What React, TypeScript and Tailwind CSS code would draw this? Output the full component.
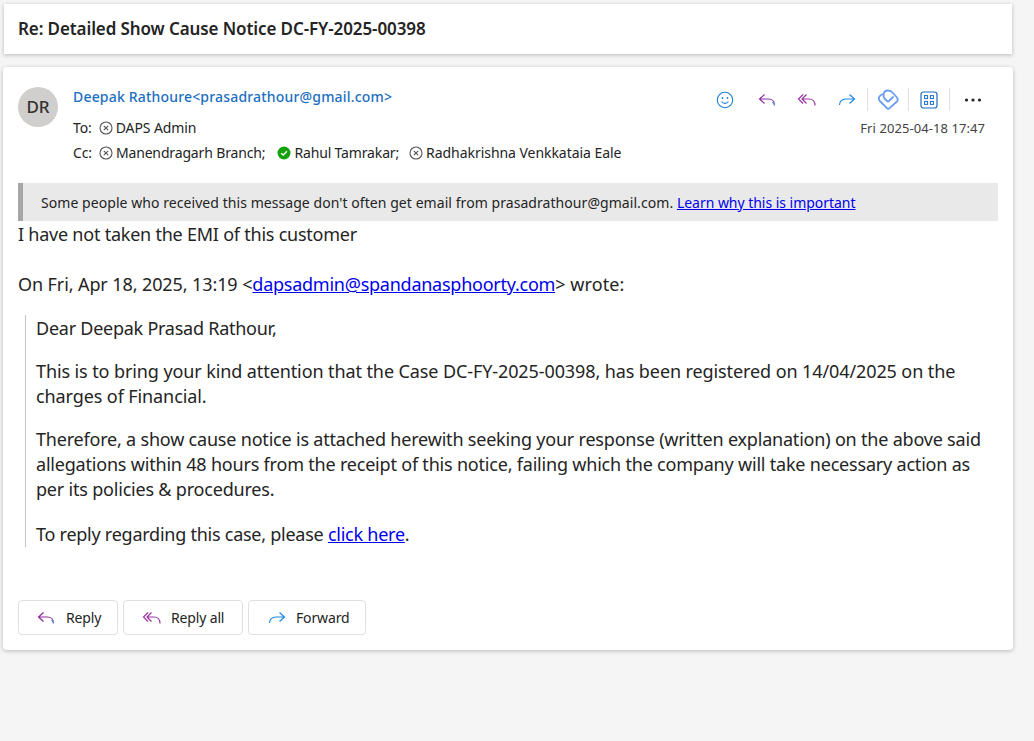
import React from "react";

function ReplyIcon({ className = "" }: { className?: string }) {
  return (
    <svg width="20" height="20" viewBox="0 0 20 20" fill="none" className={className}>
      <path d="M7.5 4.5 L2.5 9 L7.5 13.5 M2.5 9 H11.5 C15 9 17.5 11.5 17.5 15" stroke="#8e2a9e" strokeWidth="1.2" />
      <path d="M15.5 12 C16.8 13 17.5 14 17.5 15.5" stroke="#4a8fe0" strokeWidth="1.2" />
    </svg>
  );
}
function ReplyAllIcon({ className = "" }: { className?: string }) {
  return (
    <svg width="20" height="20" viewBox="0 0 20 20" fill="none" className={className}>
      <path d="M6 4.5 L1.5 9 L6 13.5 M9.5 4.5 L5 9 L9.5 13.5 M5 9 H12 C15.5 9 18 11.5 18 15.5" stroke="#9a35a5" strokeWidth="1.2" />
    </svg>
  );
}
function ForwardIcon({ className = "" }: { className?: string }) {
  return (
    <svg width="20" height="20" viewBox="0 0 20 20" fill="none" className={className}>
      <path d="M12.5 4.5 L17.5 9 L12.5 13.5 M17.5 9 H9 C5 9 2.5 11.5 2.5 15" stroke="#1e88e5" strokeWidth="1.2" />
    </svg>
  );
}
function Unknown() {
  return (
    <svg width="14" height="14" viewBox="0 0 14 14" fill="none" className="shrink-0">
      <circle cx="7" cy="7" r="6" stroke="#555" strokeWidth="1.1" />
      <path d="M4.8 4.8 L9.2 9.2 M9.2 4.8 L4.8 9.2" stroke="#555" strokeWidth="1.1" />
    </svg>
  );
}
function Available() {
  return (
    <svg width="14" height="14" viewBox="0 0 14 14" fill="none" className="shrink-0">
      <circle cx="7" cy="7" r="6.5" fill="#13a10e" />
      <path d="M4.2 7.2 L6.2 9.1 L9.9 5.2" stroke="#fff" strokeWidth="1.4" />
    </svg>
  );
}
function Sep() {
  return <div className="w-px h-[23px] bg-[#e0e0e0]" />;
}

export default function App() {
  return (
    <div className="min-h-[741px] bg-[#f5f5f5] pt-[4px] pl-[3px] pr-[21px] text-[#242424] font-['Noto_Sans',sans-serif]">
      <div className="ml-px mr-px h-[50px] bg-white shadow-[0_1px_4px_rgba(0,0,0,0.25)] flex items-center pl-[14px]">
        <h1 className="text-[17px] font-semibold tracking-[-0.1px]">Re: Detailed Show Cause Notice DC-FY-2025-00398</h1>
      </div>

      <div className="mt-[13px] h-[583px] bg-white rounded-[4px] shadow-[0_1px_4px_rgba(0,0,0,0.25)] pt-[20px] pl-[15px] pr-[15px] flex flex-col">
        <div className="flex h-[96px]">
          <div className="w-10 h-10 rounded-full bg-[#d1cfcd] flex items-center justify-center text-[17px] text-[#323130] font-medium">DR</div>
          <div className="ml-[15px] flex-1 text-[14px] leading-[20px]">
            <div className="text-[#1b6ec2] h-[20px] font-medium tracking-[0.18px]">Deepak Rathoure&lt;prasadrathour@gmail.com&gt;</div>
            <div className="mt-[11px] flex items-center gap-[7px] h-[20px] tracking-[-0.1px]">
              <span>To:</span>
              <span className="flex items-center gap-[3px]"><Unknown />DAPS Admin</span>
            </div>
            <div className="mt-[5px] flex items-center h-[20px] tracking-[-0.15px]">
              <span className="mr-[7px]">Cc:</span>
              <span className="flex items-center gap-[3px] mr-[12px]"><Unknown />Manendragarh Branch;</span>
              <span className="flex items-center gap-[3px] mr-[10px]"><Available />Rahul Tamrakar;</span>
              <span className="flex items-center gap-[3px] tracking-[-0.05px]"><Unknown />Radhakrishna Venkkataia Eale</span>
            </div>
          </div>
          <div className="flex flex-col items-end pr-[13px]">
            <div className="flex items-center h-[23px] mt-[1px] pr-[3px]">
              <svg width="20" height="20" viewBox="0 0 20 20" fill="none" className="mr-[22px]">
                <circle cx="10" cy="10" r="7.7" stroke="#1f7fd1" strokeWidth="1.1" />
                <circle cx="7.5" cy="8" r="0.9" fill="#1f7fd1" />
                <circle cx="12.5" cy="8" r="0.9" fill="#1f7fd1" />
                <path d="M6.5 11.5 C8 14 12 14 13.5 11.5" stroke="#1f7fd1" strokeWidth="1.1" />
              </svg>
              <ReplyIcon className="mr-[20px]" />
              <ReplyAllIcon className="mr-[20px]" />
              <ForwardIcon className="mr-[10px]" />
              <Sep />
              <svg width="22" height="22" viewBox="0 0 22 22" fill="none" className="mx-[9px]">
                <path d="M10 19.2 L2.8 12 Q0.8 9.5 2.8 7 Q4.5 5.2 6.5 5.5 Q7 1.5 11 1.5 Q14 1.5 16 4 L20 8.5 Q21.5 10.5 20 12.5 L12.5 19.2 Q11.2 20.2 10 19.2 Z" stroke="#6b9cf5" strokeWidth="1.8" strokeLinejoin="round" />
                <path d="M6.5 5.5 Q6 8 8 10 L10 12 Q11 13 12 12 L16 8" stroke="#6b9cf5" strokeWidth="1.8" strokeLinecap="round" />
              </svg>
              <Sep />
              <svg width="18" height="18" viewBox="0 0 18 18" fill="none" className="mx-[11px]">
                <rect x="1" y="1" width="16" height="16" rx="2.5" stroke="#1b6ec2" strokeWidth="1.2" />
                <rect x="4.6" y="4.6" width="3" height="3" stroke="#1b6ec2" strokeWidth="1" />
                <rect x="10.4" y="4.6" width="3" height="3" stroke="#1b6ec2" strokeWidth="1" />
                <rect x="4.6" y="10.4" width="3" height="3" stroke="#1b6ec2" strokeWidth="1" />
                <rect x="10.4" y="10.4" width="3" height="3" stroke="#1b6ec2" strokeWidth="1" />
              </svg>
              <Sep />
              <svg width="18" height="6" viewBox="0 0 18 6" className="ml-[14px]" fill="#242424">
                <circle cx="2.5" cy="3" r="1.6" />
                <circle cx="9" cy="3" r="1.6" />
                <circle cx="15.5" cy="3" r="1.6" />
              </svg>
            </div>
            <div className="mt-[9px] text-[13px] leading-[16px] text-[#424242] tracking-[0.07px]">Fri 2025-04-18 17:47</div>
          </div>
        </div>

        <div className="h-[38px] bg-[#e9e9e9] border-l-[5px] border-[#a6a6a6] flex items-center pl-[18px] text-[14px] tracking-[0.06px]">
          <span>Some people who received this message don't often get email from prasadrathour@gmail.com. <a href="#" className="text-[#0000ee] underline tracking-[-0.03px]">Learn why this is important</a></span>
        </div>

        <div className="text-[18px] leading-[25px] tracking-[-0.2px] pl-0">
          <div className="mt-[1px] tracking-[-0.23px]">I have not taken the EMI of this customer</div>
          <div className="mt-[25px] tracking-[-0.1px]">On Fri, Apr 18, 2025, 13:19 &lt;<a href="#" className="text-[#0000ee] underline tracking-[-0.25px]">dapsadmin@spandanasphoorty.com</a><span className="tracking-[0.1px]">&gt; wrote:</span></div>
          <div className="mt-[18px] ml-[7px] border-l border-[#c4c4c4] pl-[10px]">
            <p className="pt-[1px] tracking-[-0.25px]">Dear Deepak Prasad Rathour,</p>
            <p className="mt-[18px] tracking-[-0.1px]">This is to bring your kind attention that the Case DC-FY-2025-00398, has been registered on 14/04/2025 on the charges of Financial.</p>
            <p className="mt-[18px]">Therefore, a show cause notice is attached herewith seeking your response (written explanation) on the above said allegations within 48 hours from the receipt of this notice, failing which the company will take necessary action as per its policies &amp; procedures.</p>
            <p className="mt-[20px] tracking-[-0.25px]">To reply regarding this case, please <a href="#" className="text-[#0000ee] underline">click here</a>.</p>
          </div>
        </div>

        <div className="mt-[53px] flex gap-[5px] text-[14px] tracking-[-0.15px]">
          <button className="h-[35px] w-[100px] border border-[#e0e0e0] rounded-[4px] bg-white flex items-center pl-[17px] gap-[10px]"><ReplyIcon />Reply</button>
          <button className="h-[35px] w-[120px] border border-[#e0e0e0] rounded-[4px] bg-white flex items-center pl-[18px] gap-[9px]"><ReplyAllIcon />Reply all</button>
          <button className="h-[35px] w-[118px] border border-[#e0e0e0] rounded-[4px] bg-white flex items-center pl-[18px] gap-[9px]"><ForwardIcon />Forward</button>
        </div>
      </div>
    </div>
  );
}
